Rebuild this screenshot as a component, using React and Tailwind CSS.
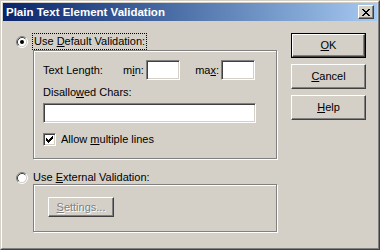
import React from 'react';

const font = { fontFamily: '"Liberation Sans", Arial, sans-serif' };

// classic raised 3D bevel
const raised =
  'border border-t-white border-l-white border-r-[#404040] border-b-[#404040] shadow-[inset_-1px_-1px_0_#808080]';
const sunken =
  'border border-t-[#808080] border-l-[#808080] border-r-white border-b-white shadow-[inset_1px_1px_0_#404040,inset_-1px_-1px_0_#d4d0c8]';

const Radio = ({ checked }) => (
  <svg width="12" height="12" viewBox="0 0 12 12" className="shrink-0">
    <circle cx="6" cy="6" r="4.5" fill="#fff" />
    <path d="M9.89 2.11 A5.5 5.5 0 0 0 2.11 9.89" fill="none" stroke="#808080" />
    <path d="M2.11 9.89 A5.5 5.5 0 0 0 9.89 2.11" fill="none" stroke="#fff" />
    <path d="M9.18 2.82 A4.5 4.5 0 0 0 2.82 9.18" fill="none" stroke="#404040" />
    <path d="M2.82 9.18 A4.5 4.5 0 0 0 9.18 2.82" fill="none" stroke="#d4d0c8" />
    {checked && <circle cx="6" cy="6" r="2" fill="#000" />}
  </svg>
);

const Check = () => (
  <svg width="7" height="7" viewBox="0 0 7 7" shapeRendering="crispEdges">
    <path d="M0 2h1v3h-1z M1 3h1v3h-1z M2 4h1v3h-1z M3 3h1v3h-1z M4 2h1v3h-1z M5 1h1v3h-1z M6 0h1v3h-1z" fill="#000" />
  </svg>
);

const CloseX = () => (
  <svg width="8" height="7" viewBox="0 0 8 7" shapeRendering="crispEdges">
    <path d="M0 0h2v1h-2z M6 0h2v1h-2z M1 1h2v1h-2z M5 1h2v1h-2z M2 2h4v1h-4z M3 3h2v1h-2z M2 4h4v1h-4z M1 5h2v1h-2z M5 5h2v1h-2z M0 6h2v1h-2z M6 6h2v1h-2z" fill="#000" />
  </svg>
);

const Button = ({ children, isDefault }) => (
  <div className={`w-[75px] h-[25px] ${isDefault ? 'border border-black' : ''}`}>
    <div className={`w-full h-full ${raised} flex items-center justify-center text-[11px] text-black`}>
      {children}
    </div>
  </div>
);

const GroupBox = ({ className, children }) => (
  <div className={`border border-[#808080] shadow-[inset_1px_1px_0_#fff,1px_1px_0_#fff] ${className}`}>
    {children}
  </div>
);

export default function App() {
  return (
    <div className="w-[380px] h-[250px] bg-[#d4d0c8] text-[11px] text-black leading-[13px]" style={font}>
      <div className="w-full h-full border border-t-[#d4d0c8] border-l-[#d4d0c8] border-r-[#404040] border-b-[#404040]">
        <div className="w-full h-full border border-t-white border-l-white border-r-[#808080] border-b-[#808080] p-px flex flex-col">
          {/* Title bar */}
          <div className="h-[18px] flex items-center justify-between bg-gradient-to-r from-[#0a246a] to-[#a6caf0] pl-[3px] pr-[3px]">
            <span className="text-white font-bold text-[11.5px]">Plain Text Element Validation</span>
            <div className={`w-[16px] h-[14px] bg-[#d4d0c8] ${raised} flex items-center justify-center`}>
              <CloseX />
            </div>
          </div>

          {/* Body */}
          <div className="flex flex-1">
            <div className="w-[288px] pl-[13px] pt-[12px] flex flex-col">
              <div className="flex items-center h-[17px] gap-[4px]">
                <Radio checked />
                <div className="border border-dotted border-black px-px h-[17px] flex items-center">
                  <span>Use <u>D</u>efault Validation:</span>
                </div>
              </div>

              <GroupBox className="ml-[17px] w-[244px] h-[109px] pl-[9px] pt-[9px] flex flex-col">
                <div className="flex items-center h-[20px]">
                  <span className="w-[80px]">Text Length:</span>
                  <span className="w-[23px]">m<u>i</u>n:</span>
                  <div className={`w-[34px] h-[20px] bg-white ${sunken}`} />
                  <span className="w-[41px] text-right pr-[2px]">ma<u>x</u>:</span>
                  <div className={`w-[34px] h-[20px] bg-white ${sunken}`} />
                </div>
                <span className="mt-[6px] h-[13px]">Disallo<u>w</u>ed Chars:</span>
                <div className={`mt-[4px] w-[213px] h-[20px] bg-white ${sunken}`} />
                <div className="mt-[10px] flex items-center gap-[5px]">
                  <div className={`w-[13px] h-[13px] bg-white ${sunken} flex items-center justify-center`}>
                    <Check />
                  </div>
                  <span>Allow <u>m</u>ultiple lines</span>
                </div>
              </GroupBox>

              <div className="mt-[12px] flex items-center h-[13px] gap-[5px]">
                <Radio />
                <span>Use <u>E</u>xternal Validation:</span>
              </div>

              <GroupBox className="ml-[17px] w-[244px] h-[48px] pl-[14px] pt-[12px]">
                <div className={`w-[66px] h-[20px] ${raised} flex items-center justify-center text-[#808080] [text-shadow:1px_1px_0_#fff]`}>
                  <span><u>S</u>ettings...</span>
                </div>
              </GroupBox>
            </div>

            <div className="pt-[12px] flex flex-col gap-[6px]">
              <Button isDefault>
                <span><u>O</u>K</span>
              </Button>
              <Button>
                <span><u>C</u>ancel</span>
              </Button>
              <Button>
                <span><u>H</u>elp</span>
              </Button>
            </div>
          </div>
        </div>
      </div>
    </div>
  );
}
